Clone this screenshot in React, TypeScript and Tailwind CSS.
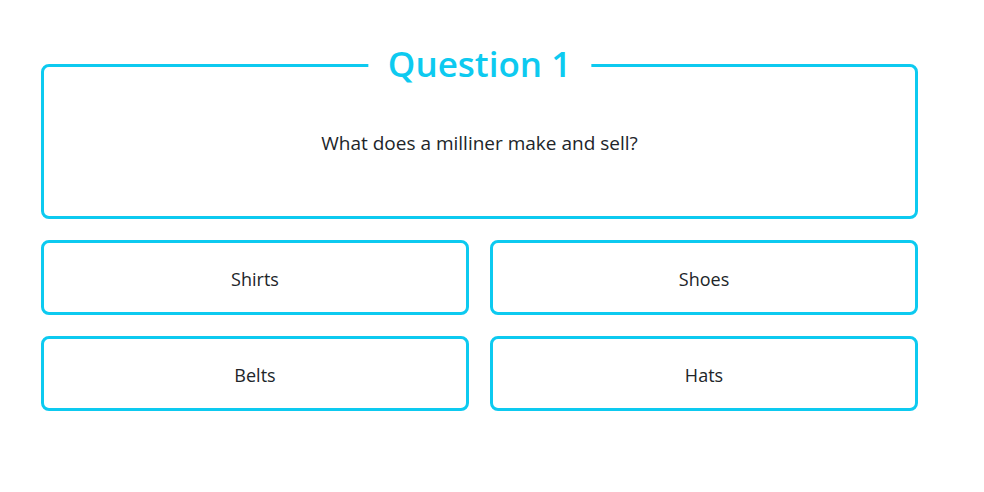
const OPTIONS = ["Shirts", "Shoes", "Belts", "Hats"];

export default function App() {
  return (
    <div
      className="min-h-screen bg-white text-[#212529]"
      style={{ fontFamily: '"Open Sans", "Noto Sans", sans-serif' }}
    >
      <div className="ml-[41px] w-[877px] pt-[64px]">
        {/* Question box */}
        <div className="relative flex h-[155px] items-center justify-center rounded-lg border-[3px] border-[#0dcaf0]">
          <h1 className="absolute left-1/2 top-[-4px] -translate-x-1/2 -translate-y-1/2 bg-white px-5 text-[35px] font-semibold leading-none text-[#0dcaf0] whitespace-nowrap">
            Question 1
          </h1>
          <p className="mt-1 text-[19px]">What does a milliner make and sell?</p>
        </div>

        {/* Answers */}
        <div className="mt-[21px] grid grid-cols-2 gap-[21px]">
          {OPTIONS.map((opt) => (
            <button
              key={opt}
              className="flex h-[75px] items-center justify-center rounded-lg border-[3px] border-[#0dcaf0] bg-white text-[18px] text-[#212529]"
            >
              <span className="mt-1">{opt}</span>
            </button>
          ))}
        </div>
      </div>
    </div>
  );
}
